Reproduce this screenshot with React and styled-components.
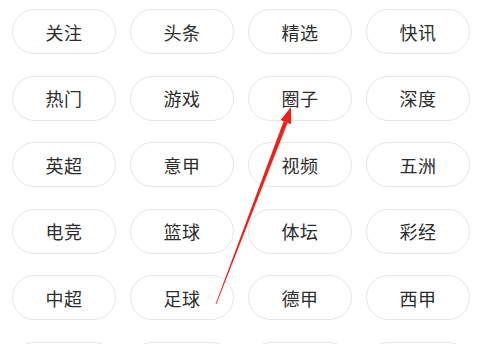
import React from "react";
import styled, { createGlobalStyle } from "styled-components";

const Global = createGlobalStyle`
  html, body {
    margin: 0;
    padding: 0;
    background: #ffffff;
    overflow: hidden;
  }
  body {
    font-family: "Noto Sans CJK SC", "Noto Sans", sans-serif;
  }
`;

const Page = styled.div`
  position: relative;
  width: 486px;
  height: 344px;
  overflow: hidden;
  background: #ffffff;
`;

const Grid = styled.div`
  display: grid;
  grid-template-columns: repeat(4, 104px);
  column-gap: 14px;
  row-gap: 21.5px;
  padding: 9.3px 16px 0 12px;
`;

const Pill = styled.div`
  box-sizing: border-box;
  height: 45px;
  border: 1px solid #e6e6e6;
  border-radius: 23px;
  display: flex;
  align-items: center;
  justify-content: center;
  font-size: 18px;
  color: #2e2e2e;
  letter-spacing: 0.5px;
  background: #ffffff;
`;

const Overlay = styled.svg`
  position: absolute;
  left: 0;
  top: 0;
  pointer-events: none;
`;

const labels = [
  "关注", "头条", "精选", "快讯",
  "热门", "游戏", "圈子", "深度",
  "英超", "意甲", "视频", "五洲",
  "电竞", "篮球", "体坛", "彩经",
  "中超", "足球", "德甲", "西甲",
];

export default function App() {
  return (
    <Page>
      <Global />
      <Grid>
        {labels.map((l) => (
          <Pill key={l}>{l}</Pill>
        ))}
        {[0, 1, 2, 3].map((i) => (
          <Pill key={"more" + i} />
        ))}
      </Grid>
      <Overlay width="486" height="344" viewBox="0 0 486 344">
        <polygon
          points="215.5,304.2 216.5,303.8 287.6,122.8 283.6,121.2"
          fill="#ee2018"
        />
        <polygon points="291,107 291,124.2 280.6,120.0" fill="#ee2018" />
      </Overlay>
    </Page>
  );
}
